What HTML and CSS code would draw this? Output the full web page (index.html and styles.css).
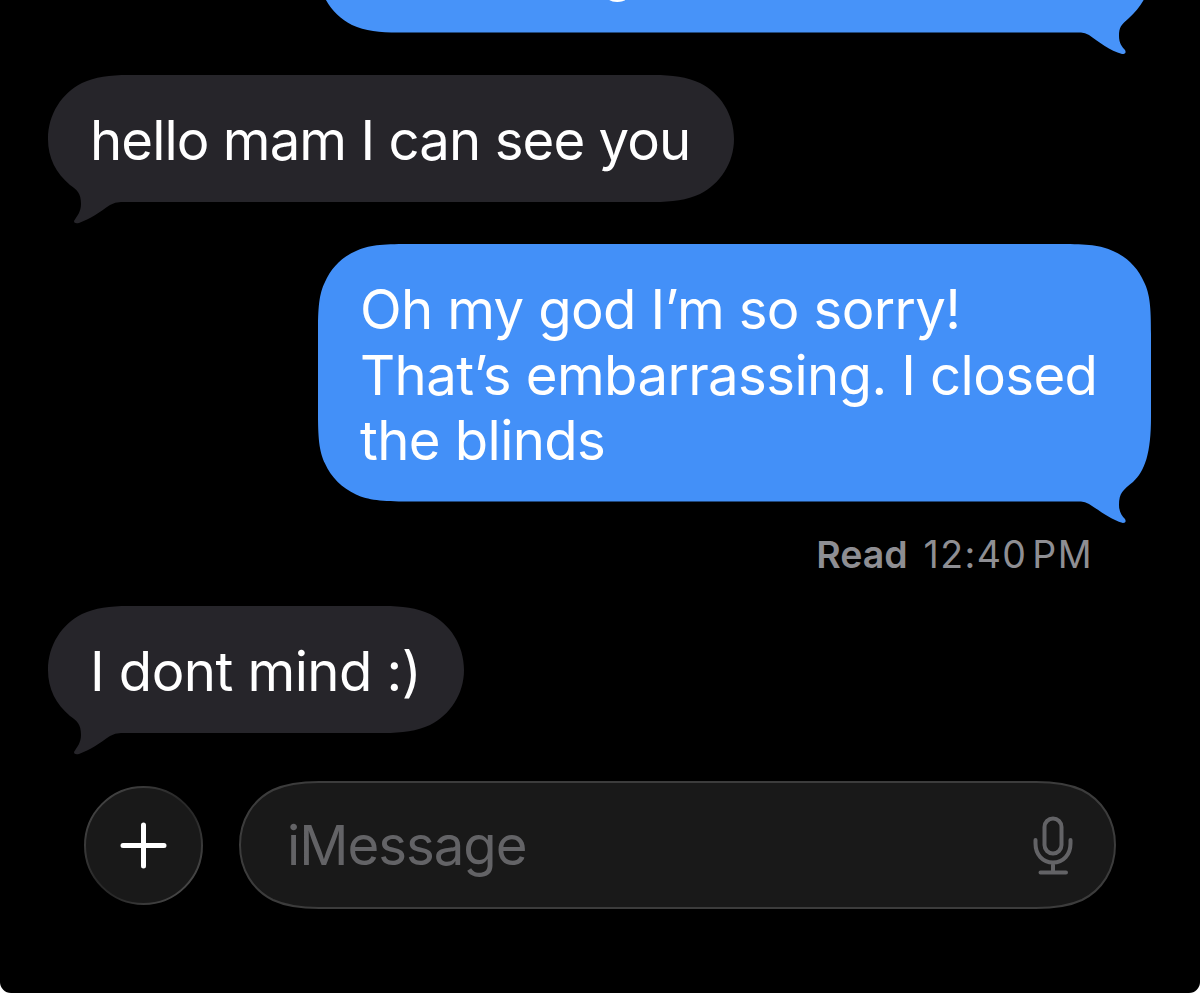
FILE: index.html
```
<!DOCTYPE html>
<html lang="en">
<head>
    <meta charset="UTF-8">
    <meta name="viewport" content="width=device-width, initial-scale=1.0">
    <title>Messages</title>
    <link rel="stylesheet" href="styles.css">
</head>
<body>
    <div class="phone">
        <div class="messages">
            <div class="bubble sent previous">
                <svg class="shape" width="833" height="152" viewBox="0 0 833 152">
                    <path d="M80 0H753C803 0 833 29 833 64C833 88 823 102 811 113C803 120 801 122 801 131C801 138 804 142 807 145Q809 149 804 149C792 146 781 137 771 130Q767 127.500 763 127.500H80C62 127.500 47 126 34 120C14 110 0 89 0 64C0 39 14 18 34 8C47 2 62 0 80 0Z"/>
                </svg>
                <p>g</p>
            </div>

            <div class="bubble received hello">
                <svg class="shape" width="686" height="152" viewBox="0 0 686 152">
                    <path d="M80 0H606C624 0 639 2 652 8C672 18 686 39 686 64C686 88 672 109 652 119C639 125 624 127 606 127H73Q67 127 62 130C52 137 42 144 31 148Q26 149 26 146C29 141 33 137 33 129C33 118 29 115 22 110C8 98 0 83 0 64C0 39 14 18 34 8C47 2 62 0 80 0Z"/>
                </svg>
                <p>hello mam I can see you</p>
            </div>

            <div class="bubble sent sorry">
                <svg class="shape" width="833" height="282" viewBox="0 0 833 282">
                    <path d="M90 0H743C769 0 783 1 795 7C809 13 820 24 826 38C832 50 833 64 833 90V173C833 209 827 227 815 238C805 246 801 249 801 261C801 268 804 272 807 275Q809 279 805 279C791 275 781 266 771 260Q767 257.500 763 257.500H90C64 257.500 50 256 38 250.500C24 244 13 233 7 219.500C1 207 0 193 0 167.500V90C0 64 1 50 7 38C13 24 24 13 38 7C50 1 64 0 90 0Z"/>
                </svg>
                <p><span class="line-1">Oh my god I’m so sorry!</span><br><span class="line-2">That’s embarrassing. I closed</span><br><span class="line-3">the blinds</span></p>
            </div>

            <div class="status"><b>Read</b><span>12:40 PM</span></div>

            <div class="bubble received mind">
                <svg class="shape" width="416" height="152" viewBox="0 0 416 152">
                    <path d="M80 0H336C354 0 369 2 382 8C402 18 416 39 416 64C416 88 402 109 382 119C369 125 354 127 336 127H73Q67 127 62 130C52 137 42 144 31 148Q26 149 26 146C29 141 33 137 33 129C33 118 29 115 22 110C8 98 0 83 0 64C0 39 14 18 34 8C47 2 62 0 80 0Z"/>
                </svg>
                <p>I dont mind :)</p>
            </div>
        </div>

        <div class="composer">
            <button class="add-btn" aria-label="Add">
                <svg width="119" height="119" viewBox="0 0 119 119">
                    <defs>
                        <linearGradient id="rim" x1="0" y1="0" x2="1" y2="1">
                            <stop offset="0.1" stop-color="#444"/>
                            <stop offset="0.45" stop-color="#292929"/>
                            <stop offset="0.6" stop-color="#292929"/>
                            <stop offset="0.9" stop-color="#4a4a4a"/>
                        </linearGradient>
                    </defs>
                    <circle cx="59.500" cy="59.500" r="58.500" fill="#191919" stroke="url(#rim)" stroke-width="2"/>
                    <path d="M39 59.500H80M59.500 39V80" stroke="#fff" stroke-width="5" stroke-linecap="round"/>
                </svg>
            </button>
            <div class="input-field">
                <svg class="shape" width="877" height="128" viewBox="0 0 877 128">
                    <path d="M80 1H797C815 1 830 3 843 9C863 19 876 39 876 64C876 89 863 109 843 119C830 125 815 127 797 127H80C62 127 47 125 34 119C14 109 1 89 1 64C1 39 14 19 34 9C47 3 62 1 80 1Z" fill="#191919" stroke="#3c3c3c" stroke-width="2"/>
                </svg>
                <span class="placeholder">iMessage</span>
                <svg class="mic" width="42" height="60" viewBox="0 0 42 60" fill="none" stroke="#636366" stroke-width="4" stroke-linecap="round">
                    <rect x="12.500" y="3.500" width="17" height="35" rx="8.500"/>
                    <path d="M3.500 25V28.500C3.500 39.500 10.500 47.500 21 47.500S38.500 39.500 38.500 28.500V25M21 48V57.500M8.500 57.500H34"/>
                </svg>
            </div>
        </div>
    </div>
</body>
</html>
```
FILE: styles.css
```
* {
    box-sizing: border-box;
}
body {
    margin: 0;
    background: #fff;
    font-family: Inter, "Liberation Sans", sans-serif;
}
.phone {
    width: 1200px;
    height: 993px;
    background: #000;
    border-radius: 0 0 11px 11px;
    overflow: hidden;
}
.messages {
    display: flex;
    flex-direction: column;
    padding: 0 49px 0 48px;
}
.bubble {
    position: relative;
    flex-shrink: 0;
    padding: 33px 42px 29px;
    color: #fff;
    font-size: 54.5px;
    line-height: 65.5px;
    white-space: nowrap;
}
.bubble p {
    position: relative;
    margin: 0;
}
.shape {
    position: absolute;
    top: 0;
    left: 0;
}
.received {
    align-self: flex-start;
    height: 127px;
    margin-bottom: 42px;
}
.received .shape {
    fill: #26252a;
}
.sent {
    align-self: flex-end;
    width: 833px;
}
.sent .shape {
    fill: #4390f8;
}
.previous {
    height: 127px;
    margin-top: -95px;
    margin-bottom: 43px;
    padding-left: 283px;
}
.previous .shape {
    fill: #4793f9;
}
.hello {
    width: 686px;
    letter-spacing: -0.93px;
}
.sorry {
    height: 257px;
}
.line-1 {
    letter-spacing: -0.64px;
}
.line-2 {
    letter-spacing: -0.6px;
}
.line-3 {
    letter-spacing: -0.6px;
}
.status {
    display: flex;
    justify-content: flex-end;
    gap: 16px;
    height: 105px;
    padding: 31px 58px 0 0;
    color: #8e8e93;
    font-size: 37.5px;
    line-height: 46px;
}
.status b {
    font-weight: 600;
}
.status span {
    letter-spacing: 1.4px;
    word-spacing: -7px;
}
.mind {
    width: 416px;
    margin-bottom: 48px;
    letter-spacing: -0.55px;
}
.composer {
    display: flex;
    align-items: center;
    gap: 36px;
    padding-left: 84px;
}
.add-btn {
    width: 119px;
    height: 119px;
    padding: 0;
    border: none;
    background: none;
}
.add-btn svg {
    display: block;
}
.input-field {
    position: relative;
    display: flex;
    align-items: center;
    justify-content: space-between;
    width: 877px;
    height: 128px;
    padding: 0 42px 0 48px;
}
.placeholder {
    position: relative;
    color: #636366;
    font-size: 54.5px;
    letter-spacing: -1px;
}
.mic {
    position: relative;
}
```
